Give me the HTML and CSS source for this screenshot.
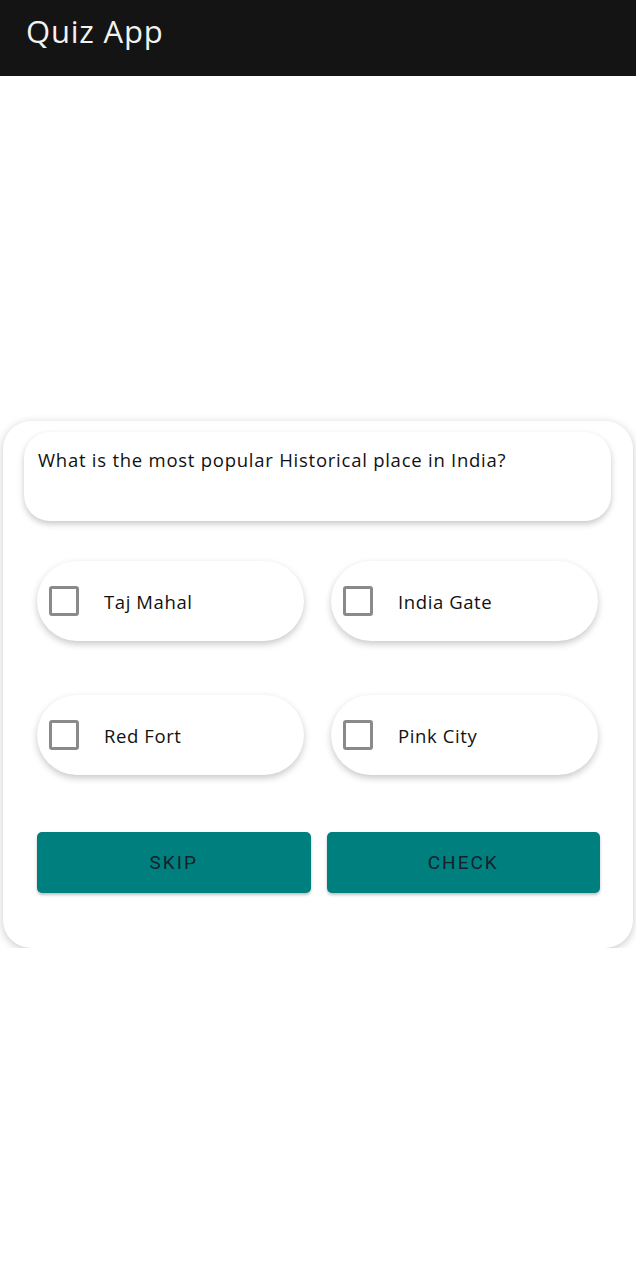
FILE: index.html
```html
<!DOCTYPE html>
<html>
<head>
<meta charset="utf-8">
<link rel="stylesheet" href="styles.css">
</head>
<body>
<header class="appbar"><h1 class="title">Quiz App</h1></header>
<main class="main">
  <section class="card">
    <div class="question">What is the most popular Historical place in India?</div>
    <div class="options">
      <label class="option"><span class="box"></span><span class="opt-text">Taj Mahal</span></label>
      <label class="option"><span class="box"></span><span class="opt-text">India Gate</span></label>
      <label class="option"><span class="box"></span><span class="opt-text">Red Fort</span></label>
      <label class="option"><span class="box"></span><span class="opt-text">Pink City</span></label>
    </div>
    <div class="actions">
      <button class="btn">SKIP</button>
      <button class="btn">CHECK</button>
    </div>
  </section>
</main>
</body>
</html>
```
FILE: styles.css
```css
html, body { margin: 0; padding: 0; background: #ffffff; }
body { width: 636px; font-family: "Open Sans", "Lato", sans-serif; color: #111; }
.appbar {
  height: 76px;
  background: #141414;
  display: flex;
  align-items: center;
  padding-left: 26px;
  box-sizing: border-box;
}
.title {
  margin: 0;
  font-family: "Open Sans", sans-serif;
  font-weight: 400;
  font-size: 31px;
  letter-spacing: 0.8px;
  color: #f2f2f2;
  position: relative;
  top: -7px;
}
.main { padding-top: 345px; }
.card {
  margin-left: 3px;
  width: 630px;
  box-sizing: border-box;
  background: #fff;
  border-radius: 28px;
  box-shadow: 0 2px 8px rgba(0,0,0,0.22);
  padding: 11px 22px 55px 21px;
}
.question {
  height: 89px;
  box-sizing: border-box;
  border-radius: 26px;
  background: #fff;
  box-shadow: 0 3px 6px rgba(0,0,0,0.22);
  padding: 15px 14px;
  font-size: 18.5px;
  letter-spacing: 0.75px;
  color: #111;
}
.options {
  margin: 40px 13px 0 13px;
  display: grid;
  grid-template-columns: 267px 267px;
  column-gap: 27px;
  row-gap: 54px;
}
.option {
  height: 80px;
  border-radius: 40px;
  background: #fff;
  box-shadow: 0 3px 7px rgba(0,0,0,0.22);
  display: flex;
  align-items: center;
  padding-left: 12px;
  box-sizing: border-box;
}
.box {
  width: 30px;
  height: 30px;
  box-sizing: border-box;
  border: 3px solid #8a8a8a;
  border-radius: 3px;
}
.opt-text {
  margin-left: 25px;
  font-size: 18.5px;
  letter-spacing: 0.6px;
  color: #111;
}
.actions {
  margin: 57px 11px 0 13px;
  display: flex;
  gap: 16px;
}
.btn {
  flex: 1;
  height: 61px;
  border: none;
  border-radius: 5px;
  background: #007f7f;
  color: #15222b;
  font-family: "Roboto", sans-serif;
  font-weight: 400;
  font-size: 19px;
  letter-spacing: 2px;
  box-shadow: 0 2px 3px rgba(0,0,0,0.25);
}
```
